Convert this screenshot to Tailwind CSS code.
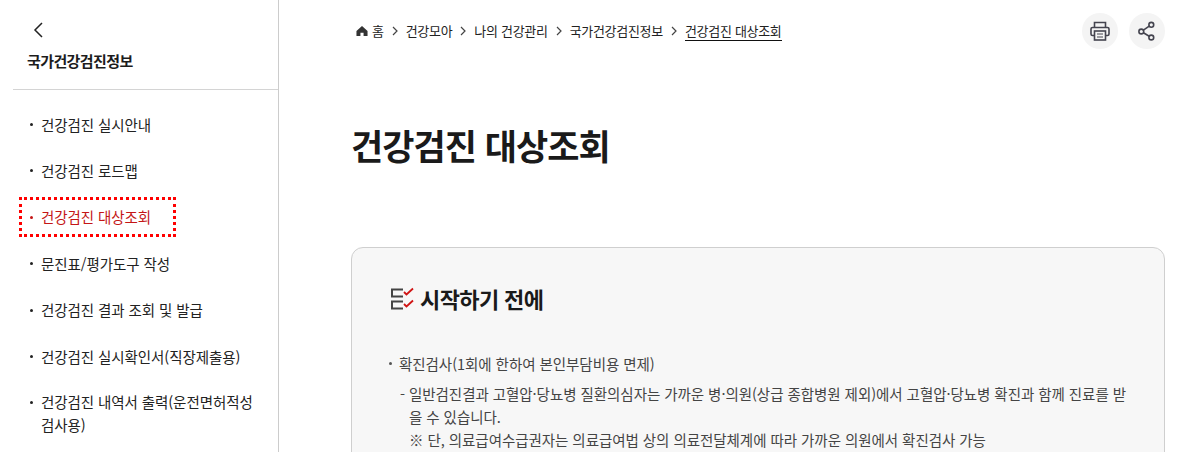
<!DOCTYPE html>
<html lang="ko">
<head>
<meta charset="utf-8">
<script src="https://cdn.jsdelivr.net/npm/@tailwindcss/browser@4"></script>
</head>
<body class="bg-white">
<div class="flex h-[452px] w-[1179px] overflow-hidden bg-white text-[#1c1c1c] font-['Noto_Sans_CJK_KR','Noto_Sans',sans-serif]">
  <aside class="w-[279px] h-[452px] shrink-0 border-r border-[#cccccc] pl-[13px]">
    <div class="h-[90px] border-b border-[#d4d4d4] pl-[14px] pt-[22px]">
      <svg class="block ml-[5px]" width="12" height="16" viewBox="0 0 12 16" fill="none" stroke="#222" stroke-width="1.5"><path d="M10 1 L3 8 L10 15"/></svg>
      <div class="mt-[13px] text-[15px] leading-[20px] font-bold tracking-[-0.6px]">국가건강검진정보</div>
    </div>
    <ul class="pt-[11px] text-[14.5px] tracking-[-0.08px] text-[#222]">
      <li class="h-[46.4px] flex items-center pl-[18px] pr-[20px] relative"><span class="absolute left-[17px] top-[22px] w-[3px] h-[3px] rounded-full bg-[#222]"></span><span class="leading-[23px] pl-[10px]">건강검진 실시안내</span></li>
      <li class="h-[46.4px] flex items-center pl-[18px] pr-[20px] relative"><span class="absolute left-[17px] top-[22px] w-[3px] h-[3px] rounded-full bg-[#222]"></span><span class="leading-[23px] pl-[10px]">건강검진 로드맵</span></li>
      <li class="h-[46.4px] flex items-center relative text-[#c41616]">
        <div class="absolute left-[6px] top-[3px] w-[157px] h-[40px] border-[3px] border-dotted border-[#ff0000]"></div>
        <span class="absolute left-[17px] top-[22px] w-[3px] h-[3px] rounded-full bg-[#c41616]"></span><span class="leading-[23px] pl-[28px]">건강검진 대상조회</span></li>
      <li class="h-[46.4px] flex items-center pl-[18px] pr-[20px] relative"><span class="absolute left-[17px] top-[22px] w-[3px] h-[3px] rounded-full bg-[#222]"></span><span class="leading-[23px] pl-[10px]">문진표/평가도구 작성</span></li>
      <li class="h-[46.4px] flex items-center pl-[18px] pr-[20px] relative"><span class="absolute left-[17px] top-[22px] w-[3px] h-[3px] rounded-full bg-[#222]"></span><span class="leading-[23px] pl-[10px]">건강검진 결과 조회 및 발급</span></li>
      <li class="h-[46.4px] flex items-center pl-[18px] pr-[20px] relative"><span class="absolute left-[17px] top-[22px] w-[3px] h-[3px] rounded-full bg-[#222]"></span><span class="leading-[23px] pl-[10px]">건강검진 실시확인서(직장제출용)</span></li>
      <li class="pt-[11px] pl-[18px] pr-[20px] relative"><span class="absolute left-[17px] top-[22px] w-[3px] h-[3px] rounded-full bg-[#222]"></span><div class="leading-[23px] pl-[10px]">건강검진 내역서 출력(운전면허적성<br>검사용)</div></li>
    </ul>
  </aside>
  <main class="flex-1 pl-[72px] pr-[14px]">
    <div class="flex items-start justify-between pt-[13px] h-[106px]">
      <nav class="flex items-center h-[36px] text-[13px] tracking-[-0.3px] text-[#222]">
        <svg class="mt-[-1px] mr-[4px] ml-[5px]" width="12" height="12" viewBox="0 0 13 13" fill="#333"><path d="M6.5 1 L12.5 6.5 V12 H8.2 V8.5 H4.8 V12 H0.5 V6.5 Z"/></svg>
        <span>홈</span>
        <svg class="mx-[8px]" width="6" height="10" viewBox="0 0 6 10" fill="none" stroke="#444" stroke-width="1.2"><path d="M1 1 L5 5 L1 9"/></svg>
        <span>건강모아</span>
        <svg class="mx-[8px]" width="6" height="10" viewBox="0 0 6 10" fill="none" stroke="#444" stroke-width="1.2"><path d="M1 1 L5 5 L1 9"/></svg>
        <span>나의 건강관리</span>
        <svg class="mx-[8px]" width="6" height="10" viewBox="0 0 6 10" fill="none" stroke="#444" stroke-width="1.2"><path d="M1 1 L5 5 L1 9"/></svg>
        <span>국가건강검진정보</span>
        <svg class="mx-[8px]" width="6" height="10" viewBox="0 0 6 10" fill="none" stroke="#444" stroke-width="1.2"><path d="M1 1 L5 5 L1 9"/></svg>
        <span class="border-b border-[#111]">건강검진 대상조회</span>
      </nav>
      <div class="flex gap-[11px]">
        <div class="w-[36px] h-[36px] rounded-full bg-[#f4f4f4] flex items-center justify-center">
          <svg width="22" height="22" viewBox="0 0 22 22" fill="none" stroke="#44444f" stroke-width="1.6"><path d="M5.5 7.5 V2.5 H16.5 V7.5"/><path d="M5 15.5 H3.5 Q2 15.5 2 14 V9 Q2 7.5 3.5 7.5 H18.5 Q20 7.5 20 9 V14 Q20 15.5 18.5 15.5 H17"/><rect x="5.5" y="11" width="11" height="9"/><path d="M8 14 H14 M8 17 H14" stroke-width="1.2"/></svg>
        </div>
        <div class="w-[36px] h-[36px] rounded-full bg-[#f4f4f4] flex items-center justify-center">
          <svg width="20" height="20" viewBox="0 0 20 20" fill="none" stroke="#44444f" stroke-width="1.6"><circle cx="4.3" cy="10.5" r="2.4"/><circle cx="14.3" cy="3.8" r="2.4"/><circle cx="14.3" cy="16.5" r="2.4"/><path d="M6.4 9.2 L12.2 5.2 M6.4 11.8 L12.2 15.2"/></svg>
        </div>
      </div>
    </div>
    <h1 class="text-[35px] leading-[50px] font-bold tracking-[-0.95px] text-[#1a1a1a] mt-[14px]">건강검진 대상조회</h1>
    <section class="mt-[77px] w-[814px] h-[300px] rounded-t-[12px] border border-[#cfcfcf] bg-[#f7f7f7] pl-[35px] pr-[36px] pt-[35px]">
      <div class="flex items-center h-[30px]">
        <svg class="ml-[3px] mr-[6px] mt-[2px]" width="24" height="24" viewBox="0 0 24 24" fill="none"><path d="M13 2.5 H2 V9.5 H13 M13 14.5 H2 V21.5 H13" stroke="#444" stroke-width="2"/><path d="M14 5 L16.5 7.5 L23 1.5 M14 17 L16.5 19.5 L23 13.5" stroke="#d01414" stroke-width="1.8"/></svg>
        <h2 class="text-[22px] font-bold leading-[30px] tracking-[-0.6px] text-[#1a1a1a]">시작하기 전에</h2>
      </div>
      <div class="mt-[39px] text-[14.5px] leading-[23px] tracking-[-0.05px] text-[#444]">
        <div class="relative pl-[12px]"><span class="absolute left-[2px] top-[10px] w-[3px] h-[3px] rounded-full bg-[#555]"></span>확진검사(1회에 한하여 본인부담비용 면제)</div>
        <div class="relative pl-[22px] mt-[7px]"><span class="absolute left-[13px] top-0">-</span>일반검진결과 고혈압·당뇨병 질환의심자는 가까운 병·의원(상급 종합병원 제외)에서 고혈압·당뇨병 확진과 함께 진료를 받을 수 있습니다.<br>※ 단, 의료급여수급권자는 의료급여법 상의 의료전달체계에 따라 가까운 의원에서 확진검사 가능</div>
      </div>
    </section>
  </main>
</div>
</body>
</html>
